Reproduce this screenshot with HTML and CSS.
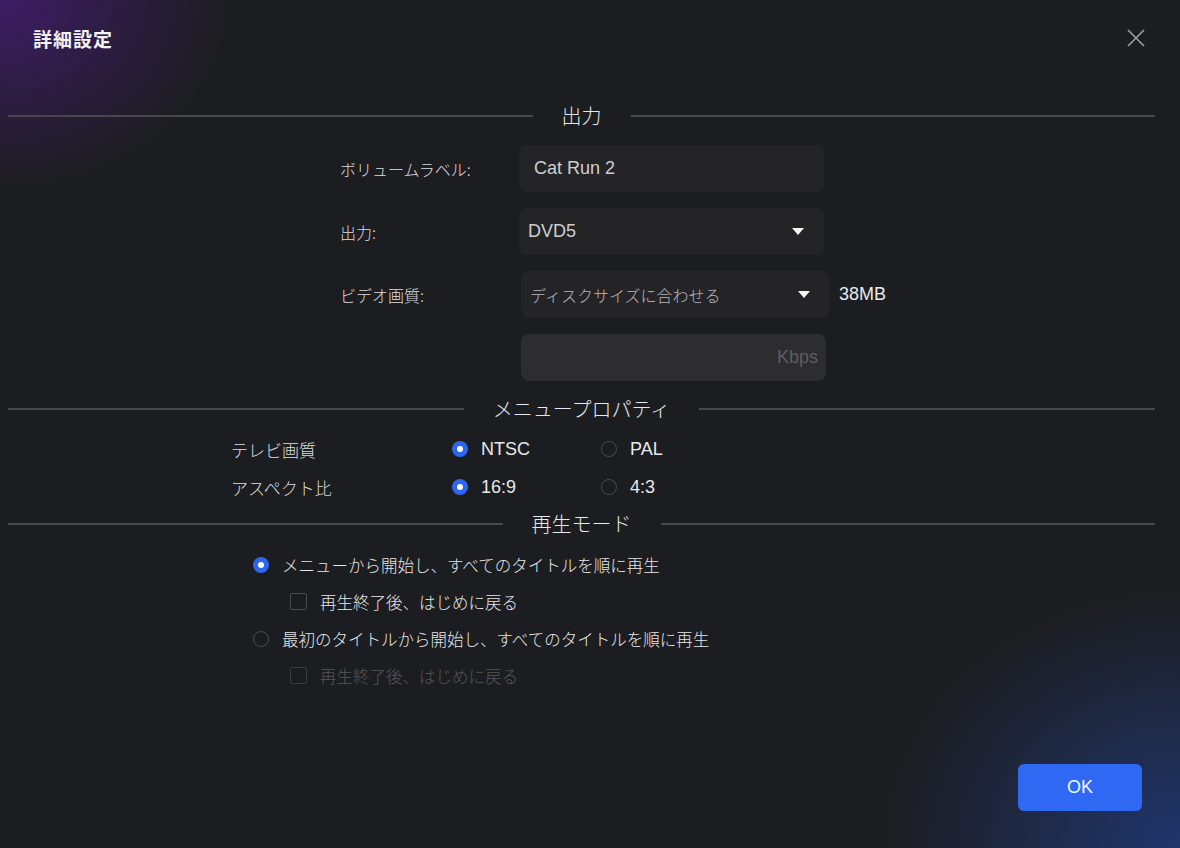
FILE: index.html
```html
<!DOCTYPE html>
<html>
<head lang="ja">
<meta charset="UTF-8">
<title>詳細設定</title>
<link rel="stylesheet" href="styles.css">
</head>
<body>
<div class="dialog">
  <div class="header">
    <h1 class="title">詳細設定</h1>
    <button class="close" title="閉じる">
      <svg width="20" height="20" viewBox="0 0 20 20"><path d="M2 2 L18 18 M18 2 L2 18" stroke="#9c9c9e" stroke-width="1.7" fill="none"/></svg>
    </button>
  </div>

  <div class="divider first"><span class="line"></span><span class="caption">出力</span><span class="line"></span></div>

  <div class="form">
    <div class="row">
      <label class="label">ボリュームラベル:</label>
      <div class="field">Cat Run 2</div>
    </div>
    <div class="row">
      <label class="label">出力:</label>
      <div class="field select"><span>DVD5</span><span class="caret"></span></div>
    </div>
    <div class="row">
      <label class="label">ビデオ画質:</label>
      <div class="field select wide"><span class="muted">ディスクサイズに合わせる</span><span class="caret"></span></div>
      <span class="size">38MB</span>
    </div>
    <div class="row">
      <span class="label"></span>
      <div class="field rate">Kbps</div>
    </div>
  </div>

  <div class="divider second"><span class="line"></span><span class="caption">メニュープロパティ</span><span class="line"></span></div>

  <div class="props">
    <div class="prop">
      <span class="prop-label">テレビ画質</span>
      <span class="option"><span class="radio on"></span>NTSC</span>
      <span class="option"><span class="radio"></span>PAL</span>
    </div>
    <div class="prop">
      <span class="prop-label">アスペクト比</span>
      <span class="option"><span class="radio on"></span>16:9</span>
      <span class="option"><span class="radio"></span>4:3</span>
    </div>
  </div>

  <div class="divider third"><span class="line"></span><span class="caption">再生モード</span><span class="line"></span></div>

  <div class="modes">
    <div class="mode"><span class="radio on"></span>メニューから開始し、すべてのタイトルを順に再生</div>
    <div class="mode sub"><span class="check"></span>再生終了後、はじめに戻る</div>
    <div class="mode"><span class="radio"></span>最初のタイトルから開始し、すべてのタイトルを順に再生</div>
    <div class="mode sub disabled"><span class="check"></span>再生終了後、はじめに戻る</div>
  </div>

  <div class="footer">
    <button class="ok">OK</button>
  </div>
</div>
</body>
</html>
```

FILE: styles.css
```css
html, body {
  margin: 0;
  padding: 0;
}

body {
  width: 1180px;
  height: 848px;
  overflow: hidden;
  background-color: #1c1d20;
  background-image:
    radial-gradient(ellipse 230px 190px at 0 0, rgba(70, 28, 118, 0.8), rgba(70, 28, 118, 0) 100%),
    radial-gradient(ellipse 300px 260px at 100% 100%, rgba(34, 62, 135, 0.75), rgba(34, 62, 135, 0) 100%);
  font-family: "Liberation Sans", "Noto Sans CJK JP", sans-serif;
  color: #e4e4e6;
}

.dialog {
  display: flex;
  flex-direction: column;
  height: 848px;
}

.header {
  display: flex;
  align-items: center;
  justify-content: space-between;
  height: 76px;
  padding: 0 34px 0 33px;
  box-sizing: border-box;
}

.title {
  margin: 0;
  font-family: "Noto Sans CJK JP", sans-serif;
  font-size: 19px;
  font-weight: bold;
  letter-spacing: 1px;
  color: #f2f2f4;
}

.close {
  display: flex;
  background: none;
  border: none;
  padding: 0;
  cursor: pointer;
}

/* section dividers */
.divider {
  display: flex;
  align-items: center;
  height: 30px;
  margin: 0 25px 0 8px;
}

.divider.first {
  margin-top: 25px;
}

.divider.second {
  margin-top: 13px;
}

.divider.third {
  margin-top: 7px;
}

.divider .line {
  flex: 1;
  height: 2px;
  background-color: #48484c;
}

.divider .caption {
  padding: 0 29px;
  font-family: "Noto Sans CJK JP", sans-serif;
  font-size: 20px;
  font-weight: 300;
  line-height: 30px;
  color: #e8e8ea;
}

/* output form */
.form {
  display: flex;
  flex-direction: column;
  gap: 16px;
  margin-top: 14px;
  padding-left: 340px;
}

.row {
  display: flex;
  align-items: center;
  height: 47px;
}

.label {
  width: 179px;
  font-family: "Noto Sans CJK JP", sans-serif;
  font-size: 16px;
  font-weight: 300;
  color: #dcdcde;
}

.field {
  display: flex;
  align-items: center;
  justify-content: space-between;
  width: 305px;
  height: 47px;
  box-sizing: border-box;
  padding: 0 15px;
  background-color: #242427;
  border-radius: 8px;
  font-size: 18px;
  color: #cfcfd2;
}

.select {
  padding: 0 20px 0 9px;
}

.select.wide {
  width: 309px;
  margin-left: 2px;
}

.muted {
  font-family: "Noto Sans CJK JP", sans-serif;
  font-size: 16px;
  font-weight: 300;
  color: #b8b8bb;
}

.caret {
  width: 0;
  height: 0;
  border-left: 6px solid transparent;
  border-right: 6px solid transparent;
  border-top: 7px solid #f4f4f6;
}

.size {
  margin-left: 9px;
  font-size: 18px;
  color: #e8e8ea;
}

.rate {
  justify-content: flex-end;
  margin-left: 2px;
  padding-right: 8px;
  background-color: #2d2d30;
  color: #5e5e62;
}

/* menu properties */
.props {
  display: flex;
  flex-direction: column;
  gap: 8px;
  margin-top: 10px;
  padding-left: 231px;
}

.prop {
  display: flex;
  align-items: center;
  height: 30px;
}

.prop-label {
  width: 221px;
  font-family: "Noto Sans CJK JP", sans-serif;
  font-size: 17px;
  font-weight: 300;
  color: #dcdcde;
}

.option {
  display: flex;
  align-items: center;
  width: 149px;
  font-size: 18px;
  color: #e8e8ea;
}

.radio {
  position: relative;
  display: inline-block;
  flex: none;
  width: 16px;
  height: 16px;
  box-sizing: border-box;
  margin-right: 13px;
  border: 1px solid #4a4a4e;
  border-radius: 50%;
}

.radio.on {
  border: none;
  background-color: #2f66ef;
}

.radio.on::after {
  content: "";
  position: absolute;
  left: 5px;
  top: 5px;
  width: 6px;
  height: 6px;
  border-radius: 50%;
  background-color: #ffffff;
}

/* playback mode */
.modes {
  display: flex;
  flex-direction: column;
  margin-top: 7px;
  padding-left: 253px;
}

.mode {
  display: flex;
  align-items: center;
  height: 37px;
  font-family: "Noto Sans CJK JP", sans-serif;
  font-size: 16.5px;
  font-weight: 300;
  color: #e6e6e8;
}

.mode.sub {
  padding-left: 37px;
}

.check {
  display: inline-block;
  flex: none;
  width: 17px;
  height: 17px;
  box-sizing: border-box;
  margin-right: 13px;
  border: 1px solid #4a4a4e;
  border-radius: 2px;
}

.mode.disabled {
  color: #55555a;
}

.mode.disabled .check {
  border-color: #3a3a3e;
}

/* footer */
.footer {
  display: flex;
  justify-content: flex-end;
  margin-top: auto;
  padding: 0 38px 37px 0;
}

.ok {
  width: 124px;
  height: 47px;
  border: none;
  border-radius: 6px;
  background-color: #2f68f2;
  color: #f4f6fb;
  font-family: "Liberation Sans", sans-serif;
  font-size: 18px;
  cursor: pointer;
}
```
